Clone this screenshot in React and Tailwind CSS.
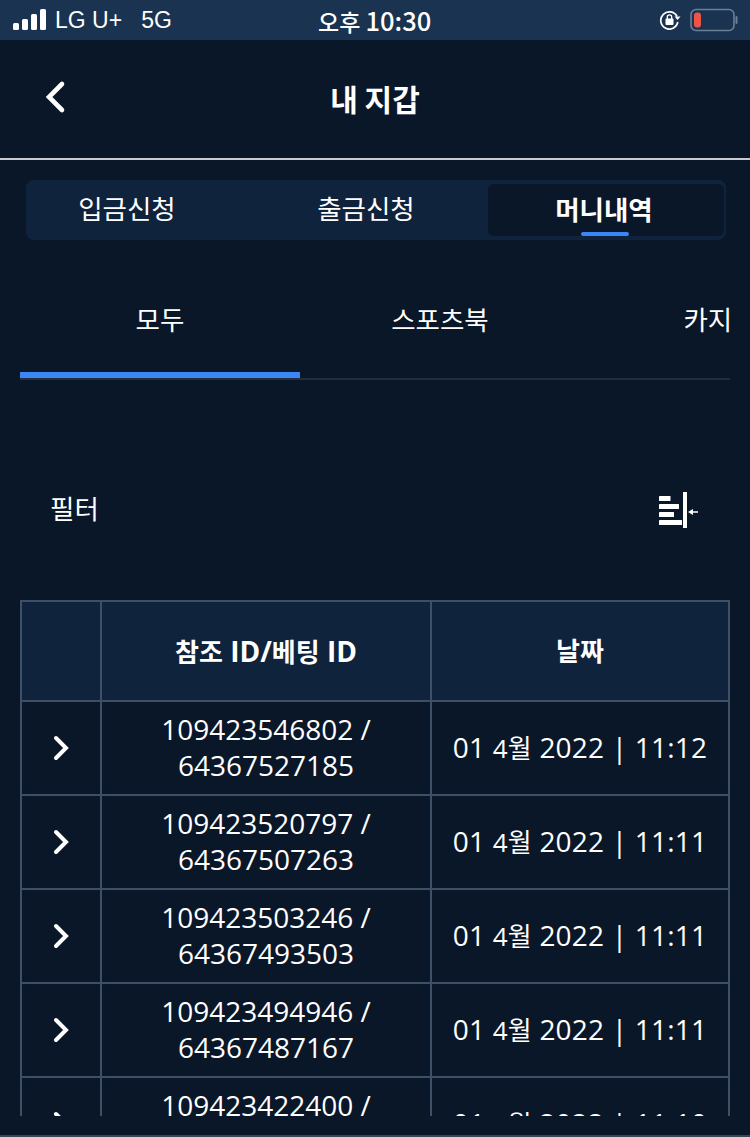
const KR = "font-['Noto_Sans_CJK_KR','Noto_Sans',sans-serif]";

const rows = [
  { ref: "109423546802 /", bet: "64367527185", time: "11:12" },
  { ref: "109423520797 /", bet: "64367507263", time: "11:11" },
  { ref: "109423503246 /", bet: "64367493503", time: "11:11" },
  { ref: "109423494946 /", bet: "64367487167", time: "11:11" },
  { ref: "109423422400 /", bet: "64367431120", time: "11:10" },
];

const StatusBar = () => (
  <div className="h-10 bg-[#1a3350] flex items-center justify-between text-white relative shrink-0">
    <div className="flex items-center pl-[13px]">
      <svg width="34" height="22" viewBox="0 0 34 22" fill="white">
        <rect x="0" y="14" width="6" height="7" rx="1.5" />
        <rect x="9" y="10" width="6" height="11" rx="1.5" />
        <rect x="18" y="5" width="6" height="16" rx="1.5" />
        <rect x="27" y="0" width="6" height="21" rx="1.5" />
      </svg>
      <span className="ml-[8px] text-[23px] leading-none font-['Liberation_Sans',sans-serif]">LG U+</span>
      <span className="ml-[19px] text-[23px] leading-none font-['Liberation_Sans',sans-serif]">5G</span>
    </div>
    <span className={`absolute left-[318px] top-[5px] text-[23px] leading-[30px] font-medium ${KR}`}>
      오후 <span className="text-[25.5px]">10:30</span>
    </span>
    <div className="flex items-center pr-[12px]">
      <svg width="22" height="22" viewBox="0 0 22 22" fill="none">
        <path d="M18 7.5A8.6 8.6 0 1 0 18.8 13" stroke="white" strokeWidth="1.7" />
        <path d="M15.5 7.5h6l-3 3.5z" fill="white" />
        <rect x="6.5" y="9.5" width="8" height="6.5" rx="1" fill="white" />
        <path d="M8.3 10V8a2.2 2.2 0 0 1 4.4 0v2" stroke="white" strokeWidth="1.3" />
      </svg>
      <svg width="48" height="24" viewBox="0 0 48 24" className="ml-[9px]" fill="none">
        <rect x="1" y="1.5" width="43" height="21" rx="5" stroke="#6d7f93" strokeWidth="1.6" />
        <rect x="4" y="4.5" width="7" height="15" rx="3" fill="#ef5345" />
        <rect x="45.5" y="8" width="2" height="8" rx="1" fill="#6d7f93" />
      </svg>
    </div>
  </div>
);

const Header = () => (
  <div className="h-[120px] border-b-2 border-[#c9cbce] flex items-center justify-center relative shrink-0">
    <svg width="22" height="34" viewBox="0 0 22 34" fill="none" className="absolute left-[45px] top-[40px]">
      <path d="M17 4 L4 17 L17 30" stroke="white" strokeWidth="4.6" strokeLinecap="round" />
    </svg>
    <span className={`text-[30px] font-bold text-white leading-none -mt-[2px] ${KR}`}>내 지갑</span>
  </div>
);

const Segments = () => (
  <div className={`mt-5 ml-[26px] w-[700px] h-[60px] rounded-lg bg-[#10233c] flex items-center text-[26.5px] text-white ${KR}`}>
    <div className="w-[202px] text-center -mt-[4px]">입금신청</div>
    <div className="w-[276px] text-center -mt-[4px]">출금신청</div>
    <div className="relative w-[236px] h-[52px] -ml-[16px] rounded-md bg-[#0a1728] flex items-center justify-center font-bold">
      <span className="-mt-[3px] -ml-[4px]">머니내역</span>
      <div className="absolute bottom-0 left-[93px] w-12 h-1 rounded-full bg-[#3b87f5]" />
    </div>
  </div>
);

const Tabs = () => (
  <div className={`mt-5 mx-5 h-[120px] border-b-2 border-[#222e3e] flex overflow-hidden text-[26.5px] text-white ${KR}`}>
    <div className="relative w-[280px] shrink-0 flex items-center justify-center">
      <span className="-mt-[1px]">모두</span>
      <div className="absolute bottom-0 inset-x-0 h-1.5 bg-[#3b87f5]" />
    </div>
    <div className="w-[280px] shrink-0 flex items-center justify-center"><span className="-mt-[1px]">스포츠북</span></div>
    <div className="w-[280px] shrink-0 flex items-center justify-center"><span className="-mt-[1px]">카지노</span></div>
  </div>
);

const Filter = () => (
  <div className="mt-[90px] h-[80px] flex items-center justify-between pl-[50px] pr-[50px]">
    <span className={`text-[26.5px] text-white -mt-[4px] ${KR}`}>필터</span>
    <svg width="42" height="38" viewBox="0 0 42 38" fill="white">
      <rect x="1" y="5" width="11.5" height="5" rx="0.5" />
      <rect x="1" y="13" width="20" height="5" rx="0.5" />
      <rect x="1" y="21" width="15" height="5" rx="0.5" />
      <rect x="1" y="29" width="23" height="5" rx="0.5" />
      <rect x="25" y="1" width="4" height="36" />
      <path d="M30 21 L35 18 V20.3 H40 V21.7 H35 V24 Z" />
    </svg>
  </div>
);

const ChevronRight = () => (
  <svg width="18" height="28" viewBox="0 0 18 28" fill="none" className="mx-auto">
    <path d="M4 4 L14 14 L4 24" stroke="white" strokeWidth="4" strokeLinecap="round" />
  </svg>
);

const HistoryTable = () => (
  <div className="mt-[50px] mx-5 h-[516px] overflow-hidden">
    <table className="w-[710px] table-fixed border-collapse text-white font-['Open_Sans','Noto_Sans_CJK_KR',sans-serif]">
      <thead>
        <tr className="h-[100px] bg-[#10233c] text-[28px]">
          <th className="w-[80px] border-2 border-[#3e5068]"></th>
          <th className="w-[330px] border-2 border-[#3e5068] font-bold"><span className="text-[26px]">참조</span> ID/<span className="text-[26px]">베팅</span> ID</th>
          <th className="border-2 border-[#3e5068] font-bold text-[26px]">날짜</th>
        </tr>
      </thead>
      <tbody>
        {rows.map((row) => (
          <tr key={row.ref} className="h-[94px] text-[28px] font-[380] leading-[36px] text-center">
            <td className="border-2 border-[#3e5068]"><ChevronRight /></td>
            <td className="border-2 border-[#3e5068] pb-[2px]">
              {row.ref}
              <br />
              {row.bet}
            </td>
            <td className="border-2 border-[#3e5068] tracking-[0.2px] pb-[2px]">01 <span className="text-[26px]">4월</span> 2022 | {row.time}</td>
          </tr>
        ))}
      </tbody>
    </table>
  </div>
);

export default function App() {
  return (
    <div className="w-[750px] h-[1137px] bg-[#0a1728] overflow-hidden flex flex-col">
      <StatusBar />
      <Header />
      <Segments />
      <Tabs />
      <Filter />
      <HistoryTable />
      <div className="mt-auto h-[2px] bg-[#3a4654]" />
    </div>
  );
}
